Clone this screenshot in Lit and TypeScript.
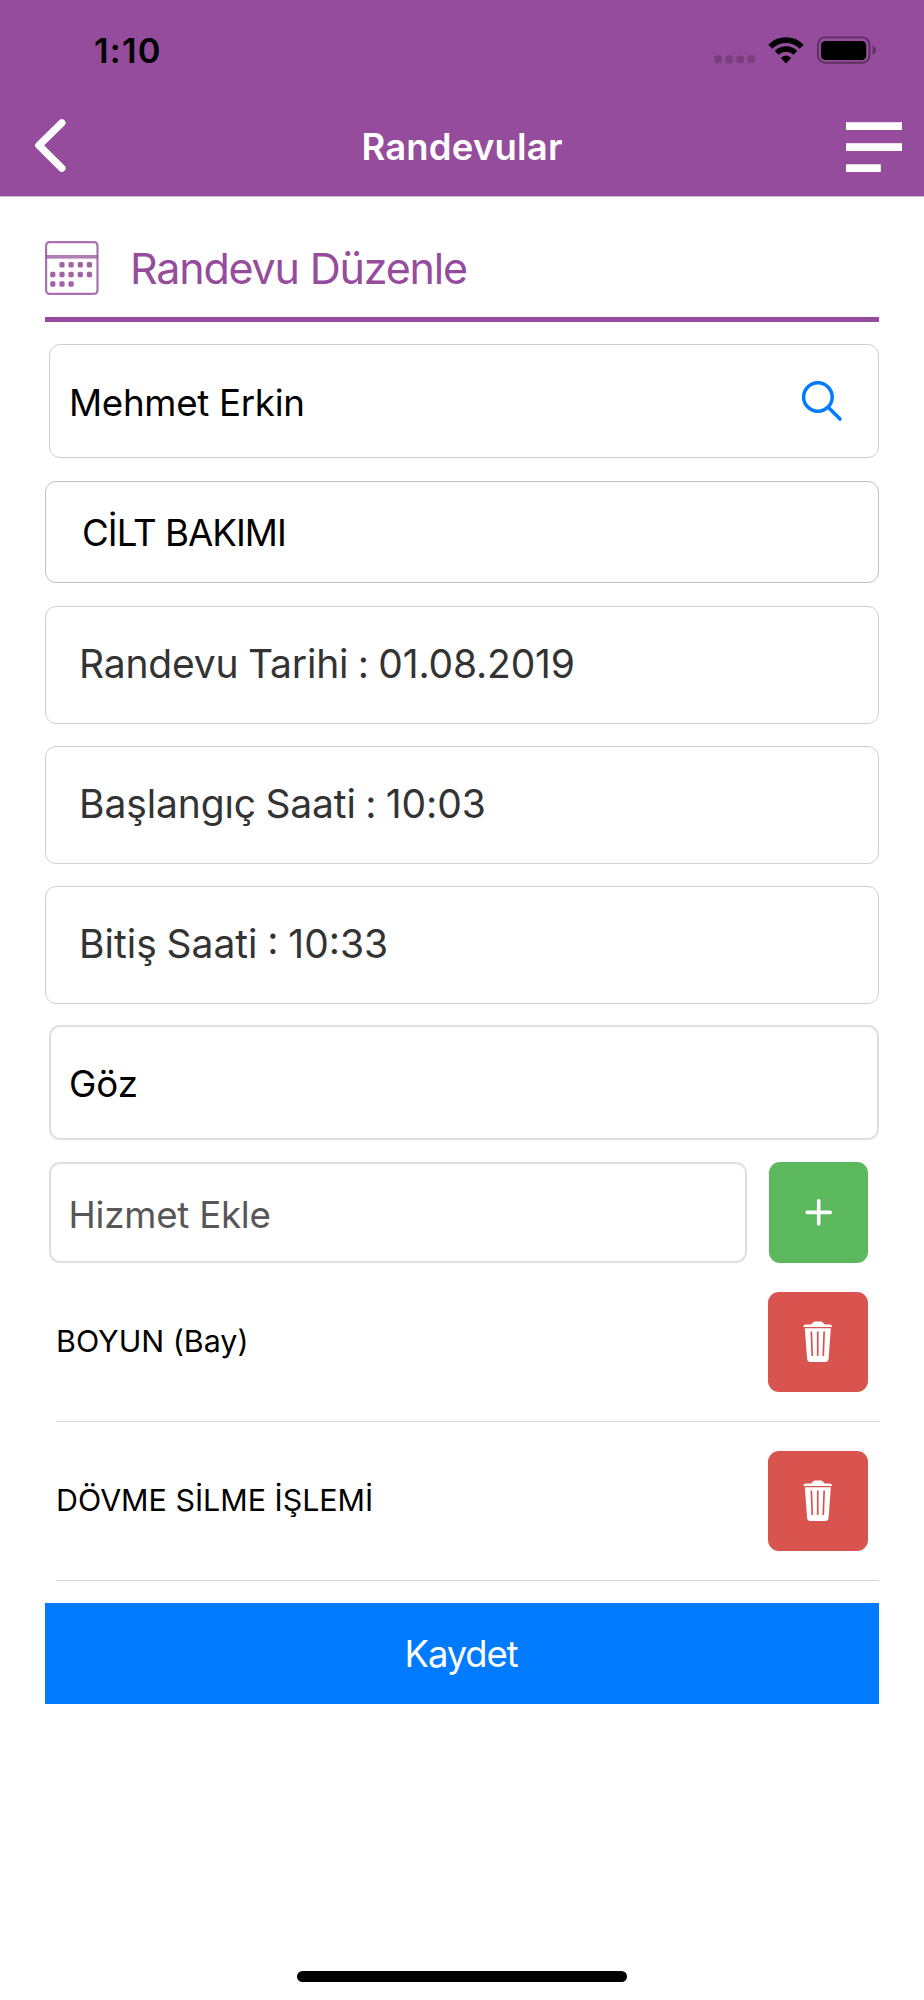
import { LitElement, html, css, svg } from "lit";
import { customElement, property, state } from "lit/decorators.js";

const searchIcon = html`<svg width="42" height="42" viewBox="0 0 42 42" fill="none" stroke="#007aff" stroke-width="3.5" stroke-linecap="round">
  <circle cx="17.9" cy="17" r="14.3" />
  <path d="M28.5 27.5 40 39" />
</svg>`;

const plusIcon = html`<svg width="28" height="28" viewBox="0 0 28 28" fill="none" stroke="#fff" stroke-width="3.6" stroke-linecap="round">
  <path d="M13.7 1.9V24.9M2.2 13.4H25.2" />
</svg>`;

const trashIcon = html`<svg width="30" height="42" viewBox="0.6 0.6 30 42">
  <path fill="#fff" d="M1 6.6C1 4.9 2 4.2 3.4 4.2H8.6L10.6 2Q11.4 1.1 12.8 1.1H18.2Q19.6 1.1 20.4 2L22.4 4.2H27C28.6 4.2 29.6 4.9 29.6 6.6Z" />
  <path fill="#fff" fill-rule="evenodd" d="M2.4 7.8H28.4L26.2 38.4Q25.9 41.6 22.8 41.6H8Q5 41.6 4.7 38.4ZM8.1 11.2 9 35.6H10.7L9.8 11.2ZM14.5 11.2V35.6H16.2V11.2ZM20.9 11.2 20 35.6H21.7L22.6 11.2Z" />
</svg>`;

@customElement("status-bar")
export class StatusBar extends LitElement {
  static styles = css`
    :host { display: flex; align-items: center; justify-content: space-between; height: 98px; padding: 2px 48px 0 94px; box-sizing: border-box; }
    .time { padding-top: 2px; font-size: 34.4px; font-weight: 600; line-height: 42px; letter-spacing: 1.2px; color: #000; }
    .signals { display: block; }
  `;
  render() {
    return html`
      <span class="time">1:10</span>
      <svg class="signals" width="163" height="30" viewBox="713 35 163 30">
        ${[718, 729.1, 740.2, 751.3].map((x) => svg`<rect x=${x - 3.9} y="55.6" width="7.8" height="7.6" rx="2.4" fill="#7b3f80" />`)}
        <g fill="none" stroke="#000">
          <path stroke-width="5.8" d="M770.3 46.7A22.2 22.2 0 0 1 801.7 46.7" />
          <path stroke-width="5.4" d="M776.7 52.9A13.2 13.2 0 0 1 795.3 52.9" />
        </g>
        <path d="M786 63.4 780.8 58.1Q783 55.6 786 55.6T791.2 58.1Z" />
        <rect x="817.9" y="37.4" width="51.6" height="25.4" rx="7.2" fill="none" stroke="#5d3061" stroke-width="1.9" />
        <rect x="821" y="41" width="45.2" height="19" rx="4.4" />
        <path fill="#5d3061" d="M872.6 45.7Q876 47 876 50.2T872.6 54.8Z" />
      </svg>
    `;
  }
}

@customElement("nav-header")
export class NavHeader extends LitElement {
  @property() heading = "";
  static styles = css`
    :host { display: grid; grid-template-columns: 1fr auto 1fr; align-items: center; height: 98px; padding: 0 22px 0 32px; box-sizing: border-box; }
    .title { font-size: 36.5px; font-weight: 600; line-height: 44px; letter-spacing: 0.18px; color: #fff; padding-right: 10px; }
    .menu { justify-self: end; }
    svg { display: block; }
  `;
  render() {
    return html`
      <svg width="36" height="58" viewBox="32 118 36 58" fill="none" stroke="#fff" stroke-width="7.4" stroke-linecap="round" stroke-linejoin="round">
        <path d="M61.8 122.8 38.9 145.4 61.8 168.2" />
      </svg>
      <span class="title">${this.heading}</span>
      <svg class="menu" width="56" height="52" viewBox="0 0 56 52" fill="#fff">
        <rect y="1.2" width="56" height="7.8" />
        <rect y="22.2" width="56" height="7.8" />
        <rect y="43.2" width="34.8" height="7.8" rx="0.6" />
      </svg>
    `;
  }
}

@customElement("app-root")
export class AppRoot extends LitElement {
  @state() services = ["BOYUN (Bay)", "DÖVME SİLME İŞLEMİ"];

  static styles = css`
    :host { display: flex; flex-direction: column; height: 2000px; background: #fff; font-family: Inter, "Liberation Sans", sans-serif; color: #000; }
    svg { display: block; }
    .top { background: #954c9c; border-bottom: 1px solid #c5bcc8; }
    .body { flex: 1; padding: 0 45px; }
    .section { display: flex; align-items: center; gap: 31px; box-sizing: border-box; height: 125px; padding-top: 21px; border-bottom: 5px solid #954c9c; margin-bottom: 22px; color: #954c9c; font-size: 43px; line-height: 52px; letter-spacing: -1.19px; }
    .field { display: flex; align-items: center; justify-content: space-between; box-sizing: border-box; border: 1px solid #cfcfcf; border-radius: 11px; font-size: 36.7px; line-height: 44px; white-space: nowrap; }
    .customer { height: 114px; margin: 0 0 23px 4px; padding: 0 36px 0 19px; border-color: #cfcdd4; letter-spacing: -0.3px; }
    .customer span { padding-top: 3.4px; }
    .branch { height: 102px; margin-bottom: 23px; padding-left: 36px; border-color: #c2c2c2; letter-spacing: -0.98px; }
    .branch span { padding-top: 1px; }
    .stamp { height: 118px; margin-bottom: 22px; padding-left: 33px; color: #333; font-size: 39px; }
    .stamp span { padding-bottom: 2px; }
    .date { letter-spacing: -0.18px; word-spacing: -1.3px; }
    .start { letter-spacing: -0.12px; word-spacing: -1.4px; }
    .end { margin-bottom: 21px; word-spacing: -1.2px; }
    .note { height: 115px; margin: 0 0 22px 4px; padding-left: 18px; border: 2px solid #dfdee5; }
    .note span { padding-top: 2.8px; }
    .add-row { display: flex; gap: 22px; margin-left: 4px; padding-right: 11px; }
    .add { flex: 1; height: 101px; padding-left: 17.5px; border: 2px solid #dfdee5; color: #575757; letter-spacing: -0.23px; }
    .add span { padding-top: 4.4px; }
    .btn { display: flex; align-items: center; justify-content: center; flex: none; padding: 0; border: 0; border-radius: 11px; font-family: inherit; }
    .plus { width: 99px; height: 101px; background: #5cb85c; }
    .trash { width: 100px; height: 100px; background: #d9534f; }
    .item { display: flex; align-items: center; justify-content: space-between; height: 158px; margin-left: 11px; padding-right: 11px; border-bottom: 1px solid #d3d5d7; font-size: 30.4px; line-height: 36px; }
    .item span { padding-bottom: 2px; }
    .save { width: 100%; height: 101px; margin-top: 22px; padding-right: 2px; border-radius: 0; background: #007aff; color: #fff; font-size: 36.4px; line-height: 44px; letter-spacing: -1.1px; }
    .home { align-self: center; width: 330px; height: 11px; margin-bottom: 18px; border-radius: 6px; background: #000; }
  `;

  private calendar() {
    const cols = [7.8, 17, 26.1, 35.3, 44.4];
    const rows: [number, number[]][] = [
      [23.8, cols.slice(1)],
      [33.5, cols],
      [43, cols.slice(0, 3)],
    ];
    return html`<svg width="54" height="54" viewBox="0 0 54 54" fill="#954c9c">
      <rect x="1.1" y="1.1" width="51.4" height="51.8" rx="3.4" fill="none" stroke="#954c9c" stroke-opacity="0.8" stroke-width="2.2" />
      <rect x="1" y="14" width="51.4" height="3.6" fill-opacity="0.72" />
      ${rows.map(([y, xs]) => xs.map((x) => svg`<rect x=${x - 2.6} y=${y - 2.8} width="5.2" height="5.6" rx="1.6" fill-opacity="0.88" />`))}
    </svg>`;
  }

  render() {
    return html`
      <header class="top">
        <status-bar></status-bar>
        <nav-header heading="Randevular"></nav-header>
      </header>
      <main class="body">
        <div class="section">${this.calendar()}<span>Randevu Düzenle</span></div>
        <div class="field customer"><span>Mehmet Erkin</span>${searchIcon}</div>
        <div class="field branch"><span>CİLT BAKIMI</span></div>
        <div class="field stamp date"><span>Randevu Tarihi : 01.08.2019</span></div>
        <div class="field stamp start"><span>Başlangıç Saati : 10:03</span></div>
        <div class="field stamp end"><span>Bitiş Saati : 10:33</span></div>
        <div class="field note"><span>Göz</span></div>
        <div class="add-row">
          <div class="field add"><span>Hizmet Ekle</span></div>
          <button class="btn plus">${plusIcon}</button>
        </div>
        ${this.services.map((s) => html`<div class="item"><span>${s}</span><button class="btn trash">${trashIcon}</button></div>`)}
        <button class="btn save">Kaydet</button>
      </main>
      <div class="home"></div>
    `;
  }
}
